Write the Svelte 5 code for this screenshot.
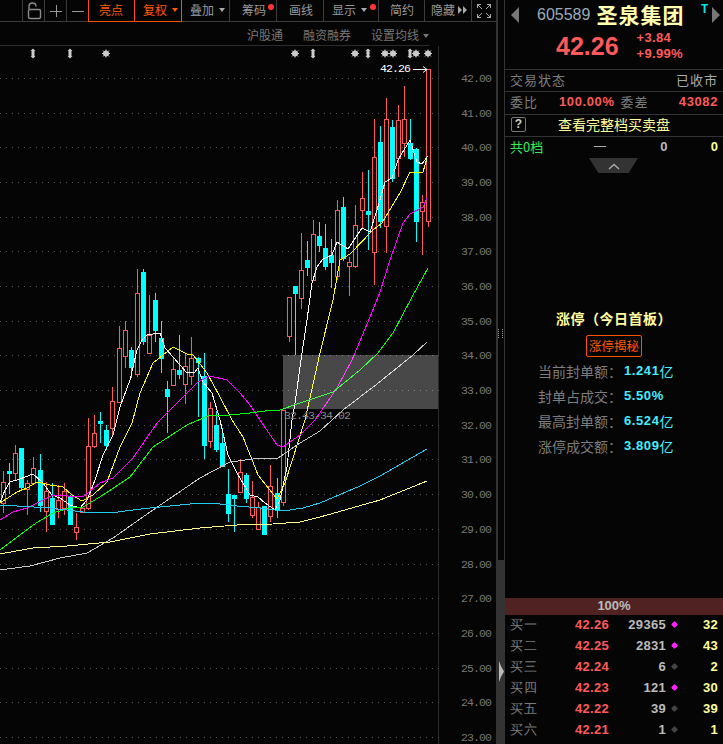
<script>
  /* chart data, in screen pixels: x, wick top, body top, body bottom, wick bottom, type */
  const candles = [
    [3,471,482,503,513,'r'],[9,463,471,474,494,'c'],[15,445,453,473,480,'r'],[21,448,448,488,490,'c'],
    [27,480,483,489,515,'r'],[33,457,468,483,483,'r'],[40,454,470,506,512,'c'],[46,482,491,511,532,'r'],
    [52,483,498,525,525,'c'],[58,485,500,509,518,'r'],[64,483,491,508,515,'r'],[70,495,496,525,525,'c'],
    [76,513,527,532,540,'r'],[82,507,508,512,512,'r'],[88,418,446,508,510,'r'],[94,415,433,446,448,'r'],
    [100,412,421,424,443,'c'],[106,425,430,446,450,'c'],[112,387,401,428,436,'r'],[119,326,348,402,402,'r'],
    [125,321,330,356,368,'r'],[131,347,350,368,378,'c'],[137,269,293,374,377,'r'],[143,269,272,342,345,'c'],
    [149,295,335,353,353,'r'],[155,293,300,331,342,'c'],[161,321,338,359,373,'c'],[167,381,389,397,433,'c'],
    [173,357,369,385,385,'r'],[179,335,370,375,379,'c'],[185,353,366,384,404,'r'],[191,337,358,376,385,'r'],
    [198,357,358,363,417,'c'],[204,353,376,446,459,'c'],[210,402,408,441,448,'r'],[216,411,425,450,452,'c'],
    [222,428,443,467,467,'c'],[228,469,494,514,522,'c'],[234,495,495,499,532,'c'],[240,459,472,492,493,'r'],
    [246,473,475,499,503,'c'],[252,481,497,515,518,'r'],[258,502,507,529,530,'r'],[264,506,506,535,535,'c'],
    [270,465,486,516,522,'r'],[277,478,493,511,518,'c'],[283,410,410,502,506,'r'],[289,297,297,336,342,'r'],
    [295,286,286,294,355,'c'],[301,233,270,298,309,'r'],[307,241,260,268,276,'c'],[313,220,234,280,280,'r'],
    [319,222,236,246,252,'c'],[325,224,248,267,270,'c'],[331,239,255,263,288,'c'],[337,200,210,276,280,'r'],
    [343,197,207,259,261,'c'],[349,257,262,266,296,'r'],[355,205,225,266,268,'r'],[362,172,198,210,228,'r'],
    [368,170,211,215,250,'c'],[374,119,157,252,285,'r'],[380,126,142,222,228,'c'],[386,98,119,226,253,'r'],
    [392,120,127,179,182,'c'],[398,105,120,158,177,'r'],[404,86,119,143,157,'r'],[410,119,143,159,160,'c'],
    [416,148,149,222,242,'c'],[422,195,202,211,255,'r'],[428,69,69,221,227,'r']
  ]

  const lines = [
    { color: '#ffffff', pts: '0,503 5,490 10,482 20,479 33,474 42,482 52,495 60,498 70,505 80,508 87,500 95,480 103,455 113,435 120,407 130,380 137,350 142,340 147,335 160,333 165,348 173,357 187,373 195,372 198,368 203,382 212,393 220,420 228,455 237,473 250,495 258,497 265,503 275,510 280,500 287,467 292,420 295,403 302,353 307,320 312,283 317,267 323,259 332,255 337,242 348,249 362,228 370,232 377,210 385,182 392,178 398,160 410,140 417,162 422,164 428,156' },
    { color: '#ffff00', pts: '0,503 17,492 27,488 37,482 50,485 63,487 72,495 82,501 93,495 107,482 120,447 132,423 140,393 153,363 173,347 187,354 193,355 207,373 220,397 232,420 243,437 258,475 277,499 285,483 305,420 320,353 333,300 340,260 350,254 373,230 382,223 400,193 410,172 423,172 427,158' },
    { color: '#ff00ff', pts: '0,520 13,512 27,508 43,500 53,495 83,497 100,483 113,478 133,458 157,423 183,397 198,382 210,376 227,380 240,393 250,405 260,420 277,445 283,447 300,435 315,420 337,388 352,360 370,317 380,292 390,260 403,223 410,214 423,207 427,198' },
    { color: '#00ff00', pts: '0,550 33,525 53,513 73,507 83,507 103,495 130,477 143,460 153,447 187,425 210,415 230,415 250,413 265,411 280,410 300,403 333,392 360,370 378,353 393,333 412,297 428,268' },
    { color: '#c8c8c8', pts: '0,570 30,566 60,558 87,553 113,538 150,512 200,478 230,462 253,459 278,458 300,443 320,431 343,410 377,384 413,355 427,342' },
    { color: '#22ccee', pts: '0,505 17,506 50,508 83,512 110,513 133,510 150,508 200,503 220,504 237,506 260,508 283,511 303,508 320,503 360,486 380,476 427,449' },
    { color: '#ffff88', pts: '0,554 33,548 67,546 110,542 150,534 200,528 237,525 273,524 300,522 320,517 380,500 427,481' }
  ]

  const prices = Array.from({ length: 20 }, (_, i) => 42 - i)
  const priceY = (p) => Math.round(78 + (42 - p) * 34.68)

  const markers = [
    [33,'b'],[70,'b'],[106,'s'],[295,'s'],[313,'b'],[355,'s'],[368,'b'],[385,'s'],[393,'s'],[410,'b'],[416,'s'],[428,'s']
  ]

  const tools = [
    { label: '亮点', w: 47, pad: 10, active: true },
    { label: '复权', w: 48, pad: 8, active: true, caret: true },
    { label: '叠加', w: 48, pad: 8, caret: true },
    { label: '筹码', w: 47, pad: 12, dot: true },
    { label: '画线', w: 47, pad: 12 },
    { label: '显示', w: 55, pad: 8, caret: true, dot: true },
    { label: '简约', w: 46, pad: 11 },
    { label: '隐藏', w: 47, pad: 6, more: true }
  ]

  const seals = [
    ['当前封单额：', '1.241', '亿'],
    ['封单占成交：', '5.50%', ''],
    ['最高封单额：', '6.524', '亿'],
    ['涨停成交额：', '3.809', '亿']
  ]

  const book = [
    ['买一', '42.26', '29365', true, '32'],
    ['买二', '42.25', '2831', true, '43'],
    ['买三', '42.24', '6', false, '2'],
    ['买四', '42.23', '121', true, '30'],
    ['买五', '42.22', '39', false, '39'],
    ['买六', '42.21', '1', false, '1'],
    ['买七', '42.20', '2', false, '1']
  ]
</script>

<div class="app">
  <div class="left">
    <div class="toolbar">
      <div class="spacer"></div>
      <div class="tool icon" style="width:22px">
        <svg width="16" height="18" viewBox="0 0 16 18" fill="none" stroke="#8c8c8c" stroke-width="1.4">
          <rect x="2.5" y="7.5" width="12" height="9" rx="1.5" />
          <path d="M3 7V4.5C3 2.5 4.5 1 6.5 1S10 2.5 10 4.5" />
        </svg>
      </div>
      <div class="tool icon" style="width:22px">
        <svg width="12" height="12" viewBox="0 0 12 12" stroke="#999" shape-rendering="crispEdges"><path d="M0 6H12M6 0V12" /></svg>
      </div>
      <div class="tool icon" style="width:22px">
        <svg width="12" height="12" viewBox="0 0 12 12" stroke="#999" shape-rendering="crispEdges"><path d="M0 6H12" /></svg>
      </div>
      {#each tools as t}
        <div class="tool text" class:active={t.active} style="width:{t.w}px;padding-left:{t.pad}px">
          <span>{t.label}</span>
          {#if t.caret}<i class="caret"></i>{/if}
          {#if t.dot}<i class="dot"></i>{/if}
          {#if t.more}<i class="more"></i><i class="more"></i>{/if}
        </div>
      {/each}
      <div class="tool icon last">
        <svg width="14" height="14" viewBox="0 0 14 14" fill="none" stroke="#aaa" shape-rendering="crispEdges">
          <path d="M0.5 4V0.5H4M13.5 4V0.5H10M0.5 10V13.5H4M13.5 10V13.5H10M1 1L5 5M13 1L9 5M1 13L5 9M13 13L9 9" />
        </svg>
      </div>
    </div>

    <div class="subbar">
      <span>沪股通</span>
      <span>融资融券</span>
      <span class="setting">设置均线<i class="caret grey"></i></span>
    </div>

    <svg class="chart" width="496" height="698" viewBox="0 46 496 698">
      <line x1="438.5" x2="438.5" y1="46" y2="744" stroke="#2a2a2a" />

      {#each prices as p}
        <line class="grid" x1="0" x2="441" y1={priceY(p) + 0.5} y2={priceY(p) + 0.5} />
        <text class="axis" x="461" y={priceY(p) + 4}>{p.toFixed(2)}</text>
      {/each}

      {#each markers as [x, kind]}
        {#if kind === 's'}
          <g transform="translate({x} 53.5)" class="mark">
            <circle r="2.6" />
            <path d="M-4 0H4M0-4V4M-3-3L3 3M-3 3L3-3" />
          </g>
        {:else}
          <g transform="translate({x} 53.5)" class="mark">
            <path class="fill" d="M0-5L2.5-2.5H1.5V2.5H2.5L0 5L-2.5 2.5H-1.5V-2.5H-2.5Z" />
          </g>
        {/if}
      {/each}

      {#each candles as [x, wt, bt, bb, wb, kind]}
        {#if kind === 'r'}
          <line class="crisp" x1={x + 0.5} x2={x + 0.5} y1={wt} y2={bt} stroke="#ff5a5a" />
          <line class="crisp" x1={x + 0.5} x2={x + 0.5} y1={bb} y2={wb} stroke="#ff5a5a" />
          <rect class="crisp" x={x - 1.5} y={bt + 0.5} width="4" height={bb - bt} fill="#050505" stroke="#ff5a5a" />
        {:else}
          <line class="crisp" x1={x + 0.5} x2={x + 0.5} y1={wt} y2={wb} stroke="#00ffff" />
          <rect class="crisp" x={x - 2} y={bt} width="5" height={bb - bt} fill="#00ffff" />
        {/if}
      {/each}

      {#each lines as l}
        <polyline class="crisp" points={l.pts} fill="none" stroke={l.color} />
      {/each}

      <rect x="283" y="355" width="155" height="54" fill="#ffffff" fill-opacity="0.27" />
      <text class="mono range" x="284" y="419">32.43-34.02</text>

      <text class="mono last-price" x="380" y="72">42.26</text>
      <path d="M413 69.5H427M423 66.5L427 69.5L423 72.5" fill="none" stroke="#fff" />
    </svg>
  </div>

  <div class="divider">
    <div class="grip"></div>
    <div class="track"></div>
    <div class="handle"></div>
  </div>

  <div class="right">
    <div class="head">
      <i class="nav prev"></i>
      <span class="code">605589</span>
      <span class="name">圣泉集团</span>
      <span class="t">T</span>
      <i class="nav next"></i>
    </div>
    <div class="quote">
      <span class="price">42.26</span>
      <div class="change"><span>+3.84</span><span>+9.99%</span></div>
    </div>

    <div class="row top">
      <span class="cn">交易状态</span>
      <span class="cn">已收市</span>
    </div>
    <div class="row tall">
      <span class="cn">委比</span>
      <b class="ratio">100.00%</b>
      <span class="cn diff">委差</span>
      <b class="num">43082</b>
    </div>
    <div class="row">
      <span class="help">?</span>
      <span class="full">查看完整档买卖盘</span>
    </div>
    <div class="row">
      <span class="green">共0档</span>
      <span class="dash"></span>
      <b class="zero">0</b>
      <b class="zero pale">0</b>
    </div>
    <div class="tab">
      <svg width="12" height="7" viewBox="0 0 12 7" fill="none" stroke="#aaa" stroke-width="1.4"><path d="M1 6L6 1.5L11 6" /></svg>
    </div>

    <div class="seal">
      <div class="seal-title">涨停（今日首板）</div>
      <div class="seal-btn">涨停揭秘</div>
      {#each seals as [k, v, u]}
        <div class="seal-row">
          <span>{k}</span><b>{v}</b><em>{u}</em>
        </div>
      {/each}
    </div>

    <div class="pct">100%</div>
    {#each book as [k, p, q, hot, n]}
      <div class="level">
        <span class="cn">{k}</span>
        <b class="lp">{p}</b>
        <b class="lq">{q}</b>
        <i class="gem" class:hot></i>
        <b class="ln">{n}</b>
      </div>
    {/each}
  </div>
</div>

<style>
  :global(body) {
    margin: 0;
    background: #050505;
  }

  .app {
    display: flex;
    width: 723px;
    height: 744px;
    overflow: hidden;
    background: #050505;
    font-family: "Noto Sans CJK SC", "Liberation Sans", sans-serif;
    color: #999;
  }

  /* left side */
  .left {
    display: flex;
    flex-direction: column;
    width: 496px;
    flex: none;
  }
  .toolbar {
    display: flex;
    height: 21px;
    border-bottom: 1px solid #3c3c3c;
    margin-bottom: 2px;
    flex: none;
  }
  .spacer {
    width: 23px;
    border-right: 1px solid #3c3c3c;
    box-sizing: border-box;
  }
  .tool {
    display: flex;
    align-items: center;
    justify-content: center;
    box-sizing: border-box;
    height: 21px;
    border-right: 1px solid #3c3c3c;
    font-size: 12px;
    line-height: 18px;
    color: #999;
    position: relative;
    flex: none;
  }
  .tool.text {
    justify-content: flex-start;
    padding-bottom: 1px;
  }
  .tool.last {
    width: 24px;
    border-right: none;
  }
  .tool.active {
    color: #ff5a0a;
    border-left: 1px solid #ff5000;
    border-right: 1px solid #ff5000;
    border-bottom: 1px solid #ff5000;
    height: 22px;
    margin-left: -1px;
  }
  .caret {
    width: 0;
    height: 0;
    border-left: 3px solid transparent;
    border-right: 3px solid transparent;
    border-top: 4px solid #aaa;
    margin-left: 5px;
  }
  .active .caret {
    border-top-color: #ff5a0a;
  }
  .caret.grey {
    display: inline-block;
    border-top-color: #777;
    margin-left: 4px;
    vertical-align: 2px;
  }
  .dot {
    position: absolute;
    right: 2px;
    top: 4px;
    width: 6px;
    height: 6px;
    border-radius: 50%;
    background: #ff3333;
  }
  .more {
    width: 0;
    height: 0;
    border-top: 4px solid transparent;
    border-bottom: 4px solid transparent;
    border-left: 4px solid #aaa;
    margin-left: 1px;
  }
  .more:first-of-type {
    margin-left: 3px;
  }

  .subbar {
    display: flex;
    justify-content: flex-end;
    align-items: center;
    gap: 20px;
    width: 429px;
    height: 22px;
    box-sizing: border-box;
    border-bottom: 1px solid #2c2c2c;
    font-size: 12px;
    color: #777;
    flex: none;
  }

  .chart {
    display: block;
    flex: none;
  }
  .crisp {
    shape-rendering: crispEdges;
  }
  .grid {
    stroke: #555;
    stroke-dasharray: 1 5;
    shape-rendering: crispEdges;
  }
  .axis {
    font-family: "Liberation Mono", monospace;
    font-size: 11.5px;
    letter-spacing: -0.9px;
    fill: #777;
  }
  .mono {
    font-family: "Liberation Mono", monospace;
    font-size: 11.5px;
    letter-spacing: -0.9px;
  }
  .range {
    fill: #888;
  }
  .last-price {
    fill: #fff;
  }
  .mark {
    fill: #ccc;
    stroke: #ccc;
    stroke-width: 1;
  }
  .mark .fill {
    stroke: none;
  }

  /* resize strip */
  .divider {
    position: relative;
    width: 9px;
    flex: none;
    box-sizing: border-box;
    border-left: 2px solid #333;
    border-right: 1px solid #333;
  }
  .grip {
    position: absolute;
    left: 0;
    top: 329px;
    width: 5px;
    height: 9px;
    background:
      repeating-linear-gradient(#999 0 1px, transparent 1px 2px) 0 0 / 1px 100% no-repeat,
      repeating-linear-gradient(#999 0 1px, transparent 1px 2px) 4px 0 / 1px 100% no-repeat;
  }
  .track {
    position: absolute;
    left: 0;
    right: 0;
    top: 560px;
    bottom: 0;
    background: #333;
  }
  .handle {
    position: absolute;
    left: 1px;
    top: 661px;
    width: 5px;
    height: 21px;
    background: #bbb;
    clip-path: polygon(0 0, 40% 25%, 100% 50%, 40% 75%, 0 100%);
  }

  /* right side */
  .right {
    width: 218px;
    flex: none;
    font-size: 14px;
  }
  .head {
    display: flex;
    align-items: flex-start;
    height: 30px;
    position: relative;
  }
  .nav {
    position: absolute;
    top: 7px;
    width: 0;
    height: 0;
    border-top: 8px solid transparent;
    border-bottom: 8px solid transparent;
  }
  .prev {
    left: 6px;
    border-right: 8px solid #777;
  }
  .next {
    right: 3px;
    border-left: 8px solid #777;
  }
  .code {
    margin: 6px 0 0 32px;
    font-family: "Liberation Sans", sans-serif;
    font-size: 16px;
    color: #9ab;
  }
  .name {
    margin-left: 6px;
    font-size: 21px;
    font-weight: 700;
    line-height: 28px;
    color: #ffffb0;
    letter-spacing: 1px;
  }
  .t {
    position: absolute;
    left: 196px;
    top: 3px;
    font-family: "Liberation Mono", monospace;
    font-size: 12px;
    font-weight: 700;
    color: #00e5e5;
  }
  .quote {
    display: flex;
    align-items: center;
    height: 39px;
    box-sizing: border-box;
    padding: 0 0 7px 51px;
    color: #ff5a5a;
  }
  .price {
    font-family: "Liberation Sans", sans-serif;
    font-size: 25px;
    font-weight: 700;
  }
  .change {
    display: flex;
    flex-direction: column;
    margin-left: 18px;
    font-family: "Liberation Sans", sans-serif;
    font-size: 13px;
    font-weight: 700;
    line-height: 16px;
    letter-spacing: 0.3px;
  }
  .row {
    display: flex;
    align-items: center;
    justify-content: space-between;
    height: 22px;
    box-sizing: border-box;
    padding: 0 5px 3px 5px;
    border-top: 1px solid #333;
    font-family: "Noto Sans CJK SC", sans-serif;
  }
  .row.tall {
    height: 23px;
  }
  .cn {
    font-size: 13px;
    letter-spacing: 1px;
    color: #7d7d7d;
  }
  .top .cn:last-child {
    color: #aaa;
  }
  .ratio, .num {
    font-family: "Liberation Sans", sans-serif;
    font-size: 13px;
    letter-spacing: 0.6px;
    color: #ff5a5a;
  }
  .ratio {
    margin-left: 21px;
  }
  .diff {
    margin-left: 6px;
  }
  .num {
    margin-left: auto;
  }
  .help {
    width: 15px;
    height: 15px;
    margin-left: 1px;
    box-sizing: border-box;
    border: 1px solid #777;
    border-radius: 2px;
    font-family: "Liberation Sans", sans-serif;
    font-size: 12px;
    font-weight: 700;
    line-height: 13px;
    text-align: center;
    color: #ccc;
  }
  .full {
    margin: 0 auto 0 32px;
    font-size: 14px;
    color: #ffff99;
  }
  .green {
    font-size: 13px;
    color: #33ee55;
  }
  .dash {
    width: 12px;
    height: 1px;
    background: #aaa;
    margin-left: 51px;
  }
  .zero {
    margin-left: 54px;
    font-family: "Liberation Sans", sans-serif;
    font-size: 13px;
    color: #bbb;
  }
  .zero.pale {
    margin-left: auto;
    color: #ffff99;
  }
  .tab {
    display: flex;
    align-items: center;
    justify-content: center;
    width: 49px;
    height: 14px;
    margin-left: 84px;
    border-top: 1px solid #333;
    background: #333;
    clip-path: polygon(0 0, 100% 0, 81% 100%, 19% 100%);
  }

  .seal {
    display: flex;
    flex-direction: column;
    align-items: center;
    height: 425px;
    box-sizing: border-box;
    padding-top: 135px;
  }
  .seal-title {
    font-size: 14px;
    font-weight: 700;
    line-height: 20px;
    letter-spacing: 0.5px;
    color: #ffffa0;
  }
  .seal-btn {
    box-sizing: border-box;
    margin-top: 7px;
    margin-bottom: 1px;
    padding: 0 2px;
    height: 22px;
    line-height: 19px;
    border: 1px solid #ff5000;
    border-radius: 2px;
    font-size: 12.5px;
    color: #ff5a0a;
  }
  .seal-row {
    display: flex;
    align-items: center;
    align-self: flex-start;
    height: 25px;
    margin-left: 33px;
    font-size: 14px;
    color: #7d7d7d;
  }
  .seal-row b {
    margin-left: 2px;
    font-family: "Liberation Sans", sans-serif;
    font-size: 13px;
    letter-spacing: 0.6px;
    color: #44eeff;
  }
  .seal-row em {
    font-style: normal;
    font-size: 14px;
    color: #44eeff;
  }

  .pct {
    height: 17px;
    box-sizing: border-box;
    padding-bottom: 1px;
    background: #502222;
    font-family: "Liberation Sans", sans-serif;
    font-size: 13px;
    font-weight: 700;
    line-height: 16px;
    text-align: center;
    color: #bbb;
  }
  .level {
    display: grid;
    grid-template-columns: 62px 50px 44px 16px 1fr;
    align-items: center;
    height: 21px;
    box-sizing: border-box;
    padding: 0 5px 2px;
    font-family: "Liberation Sans", sans-serif;
    font-size: 13px;
    letter-spacing: 0.3px;
  }
  .lp {
    margin-left: 3px;
    color: #ff5a5a;
  }
  .lq {
    text-align: right;
    color: #bbb;
  }
  .ln {
    text-align: right;
    color: #ffff99;
  }
  .gem {
    justify-self: center;
    width: 5px;
    height: 5px;
    border-radius: 1px;
    transform: rotate(45deg);
    background: #444;
  }
  .gem.hot {
    background: #ff22ff;
  }
</style>
